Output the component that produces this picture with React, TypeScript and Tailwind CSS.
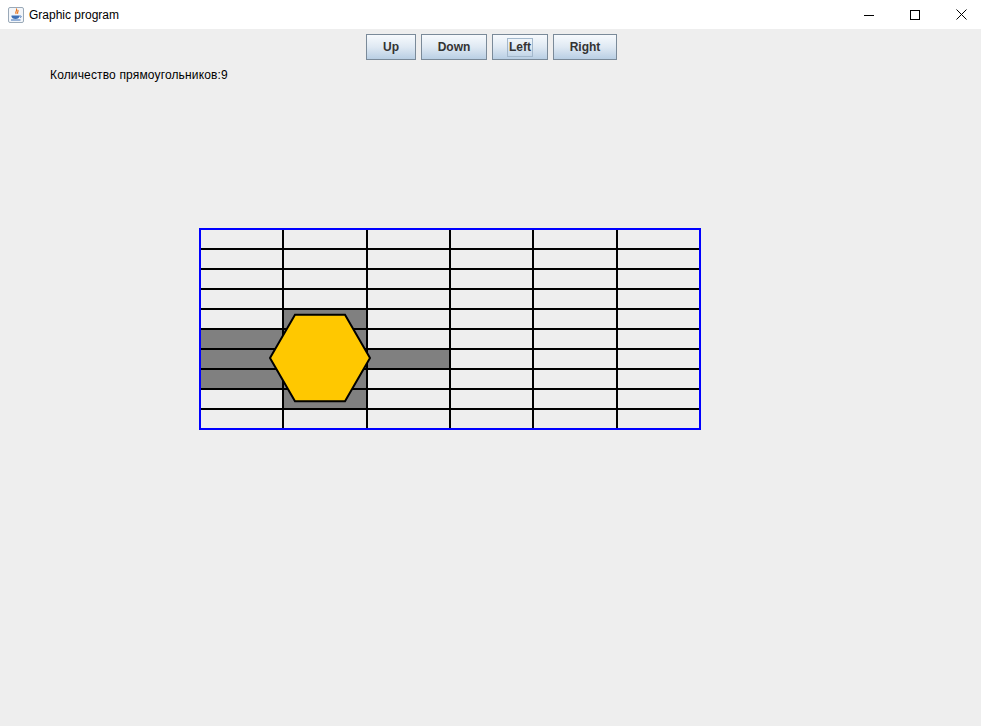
import React from 'react';

const COLS = 6;
const ROWS = 10;
const CELL_W = 500 / COLS;
const CELL_H = 20;

// filled cells as [row, col]
const FILLED: [number, number][] = [
  [4, 1], [5, 1], [6, 1], [7, 1], [8, 1],
  [5, 0], [6, 0], [7, 0],
  [6, 2],
];

function JavaIcon() {
  return (
    <svg width="16" height="16" viewBox="0 0 16 16" aria-hidden>
      <rect x="0.5" y="0.5" width="15" height="15" rx="1.5" fill="#f3f6fa" stroke="#9aa9b8" />
      <path d="M8.5 2c1 1.5-1.5 2.5-.5 4.5M10 3.5c.5 1-1 1.5-.3 2.8" stroke="#e8731a" strokeWidth="1.2" fill="none" strokeLinecap="round" />
      <path d="M3.5 8.5h8v.8c0 1.6-1.6 2.7-4 2.7s-4-1.1-4-2.7z" fill="#3d6fb5" />
      <path d="M11.5 9h1.2c.8 0 .8 1.4-.4 1.6" stroke="#3d6fb5" strokeWidth="0.9" fill="none" />
      <path d="M3 13h9.5" stroke="#3d6fb5" strokeWidth="1" />
    </svg>
  );
}

function TitleBar() {
  return (
    <div className="h-[29px] bg-white flex items-center">
      <div className="ml-[8px] mr-[5px] flex items-center">
        <JavaIcon />
      </div>
      <span className="text-[12px] text-black leading-none" style={{ fontFamily: '"Liberation Sans", Arial, sans-serif' }}>
        Graphic program
      </span>
      <div className="ml-auto mr-[-3px] flex items-center h-full">
        <div className="w-[46px] h-full flex items-center justify-center">
          <svg width="10" height="10" viewBox="0 0 10 10"><path d="M0 5.5h10" stroke="#000" strokeWidth="1" /></svg>
        </div>
        <div className="w-[46px] h-full flex items-center justify-center">
          <svg width="10" height="10" viewBox="0 0 10 10"><rect x="0.5" y="0.5" width="9" height="9" stroke="#000" fill="none" strokeWidth="1" /></svg>
        </div>
        <div className="w-[46px] h-full flex items-center justify-center">
          <svg width="11" height="11" viewBox="0 0 11 11"><path d="M0.5 0.5l10 10M10.5 0.5l-10 10" stroke="#000" strokeWidth="1" /></svg>
        </div>
      </div>
    </div>
  );
}

function MetalButton({ label, width, focused }: { label: string; width: number; focused?: boolean }) {
  return (
    <button
      type="button"
      style={{ width, fontFamily: '"Liberation Sans", Arial, sans-serif' }}
      className="h-[26px] border border-[#7a8a99] bg-gradient-to-b from-[#f7fafd] via-[#dfe9f3] to-[#b9cfe4]
        text-[12px] font-bold text-[#333333] flex items-center justify-center"
    >
      {focused ? (
        <span className="border border-[#a3b8cc] px-[1px] leading-[17px]">{label}</span>
      ) : (
        label
      )}
    </button>
  );
}

function Drawing() {
  const ox = 2;
  const oy = 2;
  const filled = new Set(FILLED.map(([r, c]) => `${r}-${c}`));
  const cx = 122;
  const cy = 131;
  const r = 50;
  const hex = Array.from({ length: 6 }, (_, i) => {
    const a = (Math.PI / 3) * i;
    return `${cx + r * Math.cos(a)},${cy + r * Math.sin(a)}`;
  }).join(' ');

  return (
    <svg width="506" height="206" viewBox="0 0 506 206" shapeRendering="crispEdges">
      {Array.from({ length: ROWS }).map((_, row) =>
        Array.from({ length: COLS }).map((_, col) => (
          <rect
            key={`${row}-${col}`}
            x={ox + col * CELL_W}
            y={oy + row * CELL_H}
            width={CELL_W}
            height={CELL_H}
            fill={filled.has(`${row}-${col}`) ? '#808080' : '#eeeeee'}
            stroke="#000"
            strokeWidth="2"
          />
        ))
      )}
      <rect x={ox} y={oy} width={500} height={200} fill="none" stroke="#0000ff" strokeWidth="2" />
      <polygon points={hex} fill="#ffc800" stroke="#000" strokeWidth="2" shapeRendering="geometricPrecision" />
    </svg>
  );
}

export default function App() {
  return (
    <div className="w-[981px] h-[726px] bg-[#eeeeee] flex flex-col overflow-hidden">
      <TitleBar />
      <div className="flex justify-center gap-[5px] mt-[5px] pl-[2px]">
        <MetalButton label="Up" width={50} />
        <MetalButton label="Down" width={66} />
        <MetalButton label="Left" width={56} focused />
        <MetalButton label="Right" width={64} />
      </div>
      <div
        className="ml-[50px] mt-[8px] text-[12px] text-black leading-[14px] tracking-[0.15px]"
        style={{ fontFamily: '"Liberation Sans", Arial, sans-serif' }}
      >
        Количество прямоугольников:9
      </div>
      <div className="ml-[198px] mt-[145px]">
        <Drawing />
      </div>
    </div>
  );
}
